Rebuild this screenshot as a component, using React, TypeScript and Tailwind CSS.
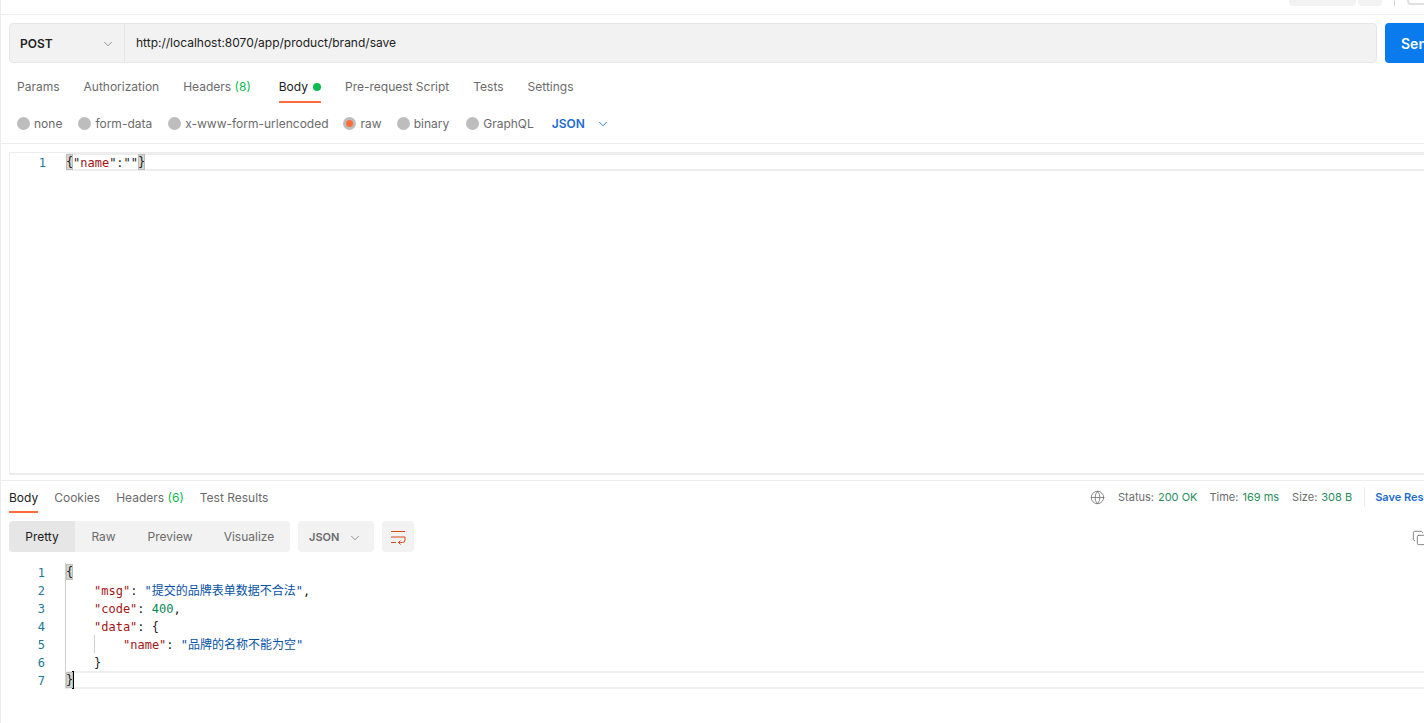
import React from "react";
import { ChevronDown, Globe, Copy } from "lucide-react";

const FONT = "font-['DejaVu_Sans_Mono','Noto_Sans_CJK_SC',monospace]";

function Tab({ label, active, count, dot, tall, wide }: { label: string; active?: boolean; count?: string; dot?: boolean; tall?: boolean; wide?: boolean }) {
  return (
    <div className={`flex items-center gap-[5px] border-b-2 ${tall ? "h-[29px] pb-[2px]" : "h-[28px]"} ${wide ? "mr-[4px]" : ""} ${active ? "border-[#ff6c37] text-[#212121]" : "border-transparent text-[#6b6b6b]"}`}>
      <span>
        {label}
        {count && <span className="text-[#0cbb52]"> ({count})</span>}
      </span>
      {dot && <span className="h-2 w-2 rounded-full bg-[#0cbb52]" />}
    </div>
  );
}

function Radio({ label, checked, className = "" }: { label: string; checked?: boolean; className?: string }) {
  return (
    <div className={`flex items-center ${checked ? "gap-[5px]" : "gap-[4px]"} ${className}`}>
      <span className="flex h-[13px] w-[13px] items-center justify-center rounded-full bg-[#bdbdbd]">
        {checked && <span className="h-[7px] w-[7px] rounded-full bg-[#ff6c37]" />}
      </span>
      <span>{label}</span>
    </div>
  );
}

function Brace({ c }: { c: string }) {
  return <span className="inline-block h-[16px] w-[7px] -translate-y-px bg-[#d4d8cf] text-center align-middle leading-[17px] text-[#212121] outline outline-1 -outline-offset-1 outline-[#bdbdbd]">{c}</span>;
}

const K = ({ t }: { t: string }) => <span className="text-[#a31515]">{t}</span>;
const S = ({ t }: { t: string }) => <span className="text-[#0451a5]">{t}</span>;
const I1 = () => <span className="inline-block w-[28px]" />;
const I2 = () => <span className="inline-block w-[57px]" />;

function Line({ n, children, active, guide }: { n: number; children?: React.ReactNode; active?: boolean; guide?: boolean }) {
  return (
    <div className="flex h-[18px] items-center leading-[16px]">
      <span className="w-[36px] shrink-0 pt-[2px] text-right text-[#237893]">{n}</span>
      <div className={`relative ml-[20px] flex h-[18px] flex-1 items-center border-l border-[#d0d0d0] text-[#212121] ${active ? "border-y-2 border-y-[#eeeeee]" : ""}`}>
        {guide && <span className="absolute bottom-0 left-[28px] top-0 border-l border-[#d0d0d0]" />}
        {active && <span className="absolute -top-[2px] left-[6px] h-[18px] w-[2px] bg-black" />}
        <span className="whitespace-pre pt-[2px]">{children}</span>
      </div>
    </div>
  );
}

export default function App() {
  return (
    <div className="h-[723px] w-[1424px] overflow-hidden border-l border-[#ededed] bg-white font-['Inter','Liberation_Sans',sans-serif] text-[12px] text-[#6b6b6b]">
      <div className="w-[1500px]">
        {/* top strip */}
        <div className="flex h-[15px] items-start justify-start border-b border-[#ededed] pl-[1288px]">
          <div className="h-[6px] w-[67px] rounded-b bg-[#f2f2f2]" />
          <div className="ml-[2px] h-[6px] w-[24px] rounded-b bg-[#f2f2f2]" />
          <div className="ml-[12px] h-[6px] w-px bg-[#d9d9d9]" />
          <div className="ml-[12px] h-[5px] w-[30px] rounded-bl border-b-2 border-l-2 border-[#e0e0e0]" />
        </div>

        {/* request row */}
        <div className="flex gap-[8px] pl-[8px] pt-[8px]">
          <div className="flex h-[40px] w-[1368px] rounded border border-[#e6e6e6] bg-[#f2f2f2] text-[#212121]">
            <div className="flex w-[115px] shrink-0 items-center justify-between border-r border-[#e6e6e6] pl-[10px] pr-[9px] pt-[1px] font-semibold">
              <span>POST</span>
              <ChevronDown size={14} strokeWidth={1.25} className="text-[#6b6b6b]" />
            </div>
            <div className="flex items-center pl-[11px] text-[#212121]">http://localhost:8070/app/product/brand/save</div>
          </div>
          <div className="flex h-[40px] w-[100px] items-center rounded-l bg-[#097bed] pl-[16px] text-[14px] font-semibold text-white">Send</div>
        </div>

        {/* request tabs */}
        <div className="flex gap-[24px] pl-[16px] pt-[11px]">
          <Tab tall label="Params" />
          <Tab tall label="Authorization" />
          <Tab tall wide label="Headers" count="8" />
          <Tab tall label="Body" active dot />
          <Tab tall label="Pre-request Script" />
          <Tab tall label="Tests" />
          <Tab tall label="Settings" />
        </div>

        {/* body type */}
        <div className="flex h-[41px] items-center gap-[16px] border-b border-[#ededed] pl-[16px] pt-[1px]">
          <Radio label="none" />
          <Radio label="form-data" />
          <Radio label="x-www-form-urlencoded" />
          <Radio label="raw" checked className="-ml-[2px]" />
          <Radio label="binary" className="-ml-[1px]" />
          <Radio label="GraphQL" className="ml-[1px]" />
          <div className="ml-[2px] flex items-center gap-[11px] font-semibold text-[#1d6ccf]">
            JSON
            <ChevronDown size={14} strokeWidth={1.5} />
          </div>
        </div>

        {/* editor */}
        <div className={`ml-[8px] mt-[8px] h-[323px] border-b-2 border-l border-t border-[#ededed] ${FONT}`}>
          <div className="flex h-[18px] items-center leading-[16px]">
            <span className="w-[36px] shrink-0 pt-[2px] text-right text-[#237893]">1</span>
            <div className="ml-[20px] flex h-[18px] flex-1 items-center border-y-2 border-[#ededed]">
              <span className="whitespace-pre pt-[2px]"><Brace c="{" /><span className="text-[#212121]">"</span><K t="name" /><span className="text-[#212121]">":""</span><Brace c="}" /></span>
            </div>
          </div>
        </div>

        {/* response tabs */}
        <div className="mt-[5px] flex h-[33px] items-end justify-between border-t border-[#ededed] pl-[8px]">
          <div className="flex gap-[16px]">
            <Tab label="Body" active />
            <Tab label="Cookies" />
            <Tab label="Headers" count="6" />
            <Tab label="Test Results" />
          </div>
          <div className="flex h-[28px] w-[409px] shrink-0 items-center pb-[4px] text-[11px]">
            <Globe size={15} strokeWidth={1.25} className="-ml-[2px] text-[#6b6b6b]" />
            <span className="ml-[13px]">Status:</span>
            <span className="ml-[4px] text-[#2a8c5e]">200 OK</span>
            <span className="ml-[12px]">Time:</span>
            <span className="ml-[4px] text-[#2a8c5e]">169 ms</span>
            <span className="ml-[13px]">Size:</span>
            <span className="ml-[4px] text-[#2a8c5e]">308 B</span>
            <span className="ml-[12px] h-[20px] w-px bg-[#ededed]" />
            <span className="ml-[10px] font-semibold text-[#1d6ccf]">Save Response</span>
          </div>
        </div>

        {/* response toolbar */}
        <div className="flex items-center pl-[8px] pt-[8px]">
          <div className="flex h-[31px] w-[281px] items-center rounded bg-[#f2f2f2]">
            <div className="flex h-full w-[66px] items-center justify-center rounded-l bg-[#e6e6e6] text-[#212121]">Pretty</div>
            <div className="flex h-full w-[57px] items-center justify-center">Raw</div>
            <div className="flex h-full w-[76px] items-center justify-center">Preview</div>
            <div className="flex h-full w-[82px] items-center justify-center">Visualize</div>
          </div>
          <div className="ml-[8px] flex h-[31px] w-[76px] items-center justify-between rounded bg-[#f2f2f2] pl-[11px] pr-[12px] pt-[2px] text-[11px] font-semibold">
            JSON
            <ChevronDown size={14} strokeWidth={1.25} />
          </div>
          <div className="ml-[8px] flex h-[31px] w-[32px] items-center justify-center rounded bg-[#f2f2f2]">
            <svg width="16" height="16" viewBox="0 0 16 16" fill="none" stroke="#d9481c" strokeWidth="1">
              <path d="M1 2.5h14M1 8h14M1 13.5h5M15 8v3a2.5 2.5 0 0 1-2.5 2.5H8.5M10.5 11.5l-2 2 2 2" />
            </svg>
          </div>
          <div className="ml-[998px] pt-[2px] text-[#6b6b6b]">
            <Copy size={16} strokeWidth={1.25} />
          </div>
        </div>

        {/* response code */}
        <div className={`ml-[8px] mt-[11px] ${FONT}`}>
          <Line n={1}><Brace c="{" /></Line>
          <Line n={2}><I1 /><K t={'"msg"'} />: <S t={'"提交的品牌表单数据不合法"'} />,</Line>
          <Line n={3}><I1 /><K t={'"code"'} />: <span className="text-[#098658]">400</span>,</Line>
          <Line n={4}><I1 /><K t={'"data"'} />: {"{"}</Line>
          <Line n={5} guide><I2 /><K t={'"name"'} />: <S t={'"品牌的名称不能为空"'} /></Line>
          <Line n={6}><I1 />{"}"}</Line>
          <Line n={7} active><Brace c="}" /></Line>
        </div>
      </div>
    </div>
  );
}
